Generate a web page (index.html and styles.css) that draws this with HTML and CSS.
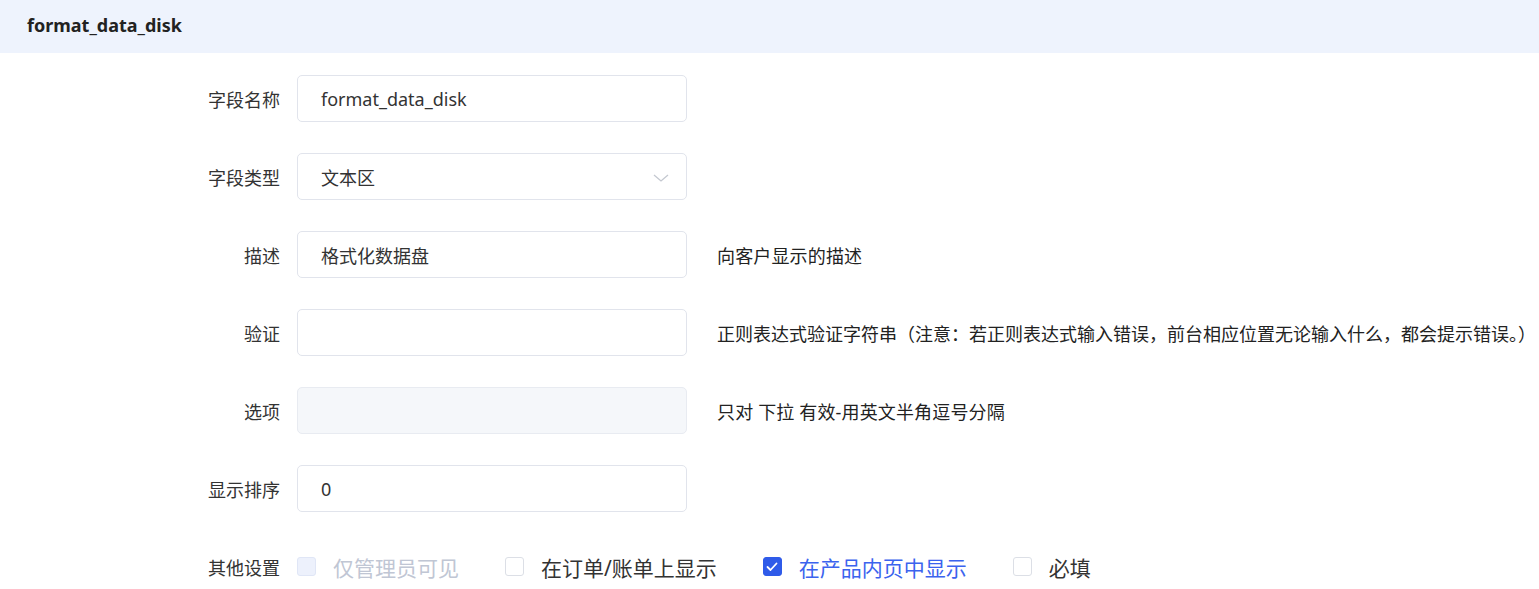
FILE: index.html
```html
<!DOCTYPE html>
<html lang="zh-CN">
<head>
<meta charset="utf-8">
<title>format_data_disk</title>
<link rel="stylesheet" href="styles.css">
</head>
<body>
<div class="panel">
  <div class="panel-header">format_data_disk</div>
  <div class="form">
    <div class="row">
      <div class="label">字段名称</div>
      <div class="field"><span class="value">format_data_disk</span></div>
    </div>
    <div class="row">
      <div class="label">字段类型</div>
      <div class="field select">
        <span class="value">文本区</span>
        <svg class="chevron" width="16" height="8" viewBox="0 0 16 8"><path d="M1 1 L8 7 L15 1" fill="none" stroke="#c4c8d0" stroke-width="1.3"/></svg>
      </div>
    </div>
    <div class="row">
      <div class="label">描述</div>
      <div class="field"><span class="value">格式化数据盘</span></div>
      <div class="hint">向客户显示的描述</div>
    </div>
    <div class="row">
      <div class="label">验证</div>
      <div class="field"></div>
      <div class="hint hint-long">正则表达式验证字符串（注意：若正则表达式输入错误，前台相应位置无论输入什么，都会提示错误。）</div>
    </div>
    <div class="row">
      <div class="label">选项</div>
      <div class="field disabled"></div>
      <div class="hint">只对 下拉 有效-用英文半角逗号分隔</div>
    </div>
    <div class="row">
      <div class="label">显示排序</div>
      <div class="field"><span class="value">0</span></div>
    </div>
    <div class="row">
      <div class="label">其他设置</div>
      <div class="checks">
        <label class="check is-disabled"><span class="box"></span><span class="text">仅管理员可见</span></label>
        <label class="check"><span class="box"></span><span class="text">在订单/账单上显示</span></label>
        <label class="check is-checked"><span class="box"><svg width="12" height="10" viewBox="0 0 12 10"><path d="M1.5 5 L4.5 8 L10.5 1.5" fill="none" stroke="#fff" stroke-width="1.8" stroke-linecap="round" stroke-linejoin="round"/></svg></span><span class="text">在产品内页中显示</span></label>
        <label class="check"><span class="box"></span><span class="text">必填</span></label>
      </div>
    </div>
  </div>
</div>
</body>
</html>
```

FILE: styles.css
```css
html, body {
  margin: 0;
  padding: 0;
  background: #ffffff;
}
body {
  font-family: "Noto Sans", "Noto Sans CJK SC", sans-serif;
  font-size: 18px;
  color: #333333;
}
.panel-header {
  height: 53px;
  box-sizing: border-box;
  padding-bottom: 4px;
  background: #eef3fd;
  display: flex;
  align-items: center;
  padding-left: 27px;
  font-weight: 700;
  font-size: 18px;
  color: #222222;
}
.form {
  padding-top: 22px;
  display: flex;
  flex-direction: column;
  gap: 31px;
}
.row {
  display: flex;
  align-items: center;
  height: 47px;
}
.label {
  width: 280px;
  text-align: right;
  margin-right: 17px;
  color: #333333;
  flex: none;
}
.field {
  width: 390px;
  height: 47px;
  box-sizing: border-box;
  border: 1px solid #e1e4ec;
  border-radius: 5px;
  padding-left: 23px;
  padding-right: 17px;
  display: flex;
  align-items: center;
  justify-content: space-between;
  flex: none;
  background: #ffffff;
}
.field.disabled {
  background: #f5f7fa;
  border-color: #e8ebf1;
}
.value {
  color: #333333;
}
.chevron {
  display: block;
  margin-top: 2px;
}
.hint {
  margin-left: 30px;
  color: #222222;
  white-space: nowrap;
  letter-spacing: 0.15px;
}
.hint-long {
  letter-spacing: 0;
}
.checks {
  display: flex;
  align-items: center;
}
.check {
  display: flex;
  align-items: center;
  font-size: 21px;
  color: #333333;
  margin-right: 46px;
}
.check .box {
  width: 19px;
  height: 19px;
  box-sizing: border-box;
  border: 1px solid #dcdfe6;
  border-radius: 3px;
  background: #ffffff;
  margin-right: 17px;
  display: flex;
  align-items: center;
  justify-content: center;
  flex: none;
}
.check.is-disabled .box {
  background: #edf1fc;
  border-color: #e0e6f6;
}
.check.is-disabled .text {
  color: #c0c6d4;
}
.check.is-checked .box {
  background: #2f5be9;
  border-color: #2f5be9;
}
.check.is-checked .text {
  color: #3b63ee;
}
```
